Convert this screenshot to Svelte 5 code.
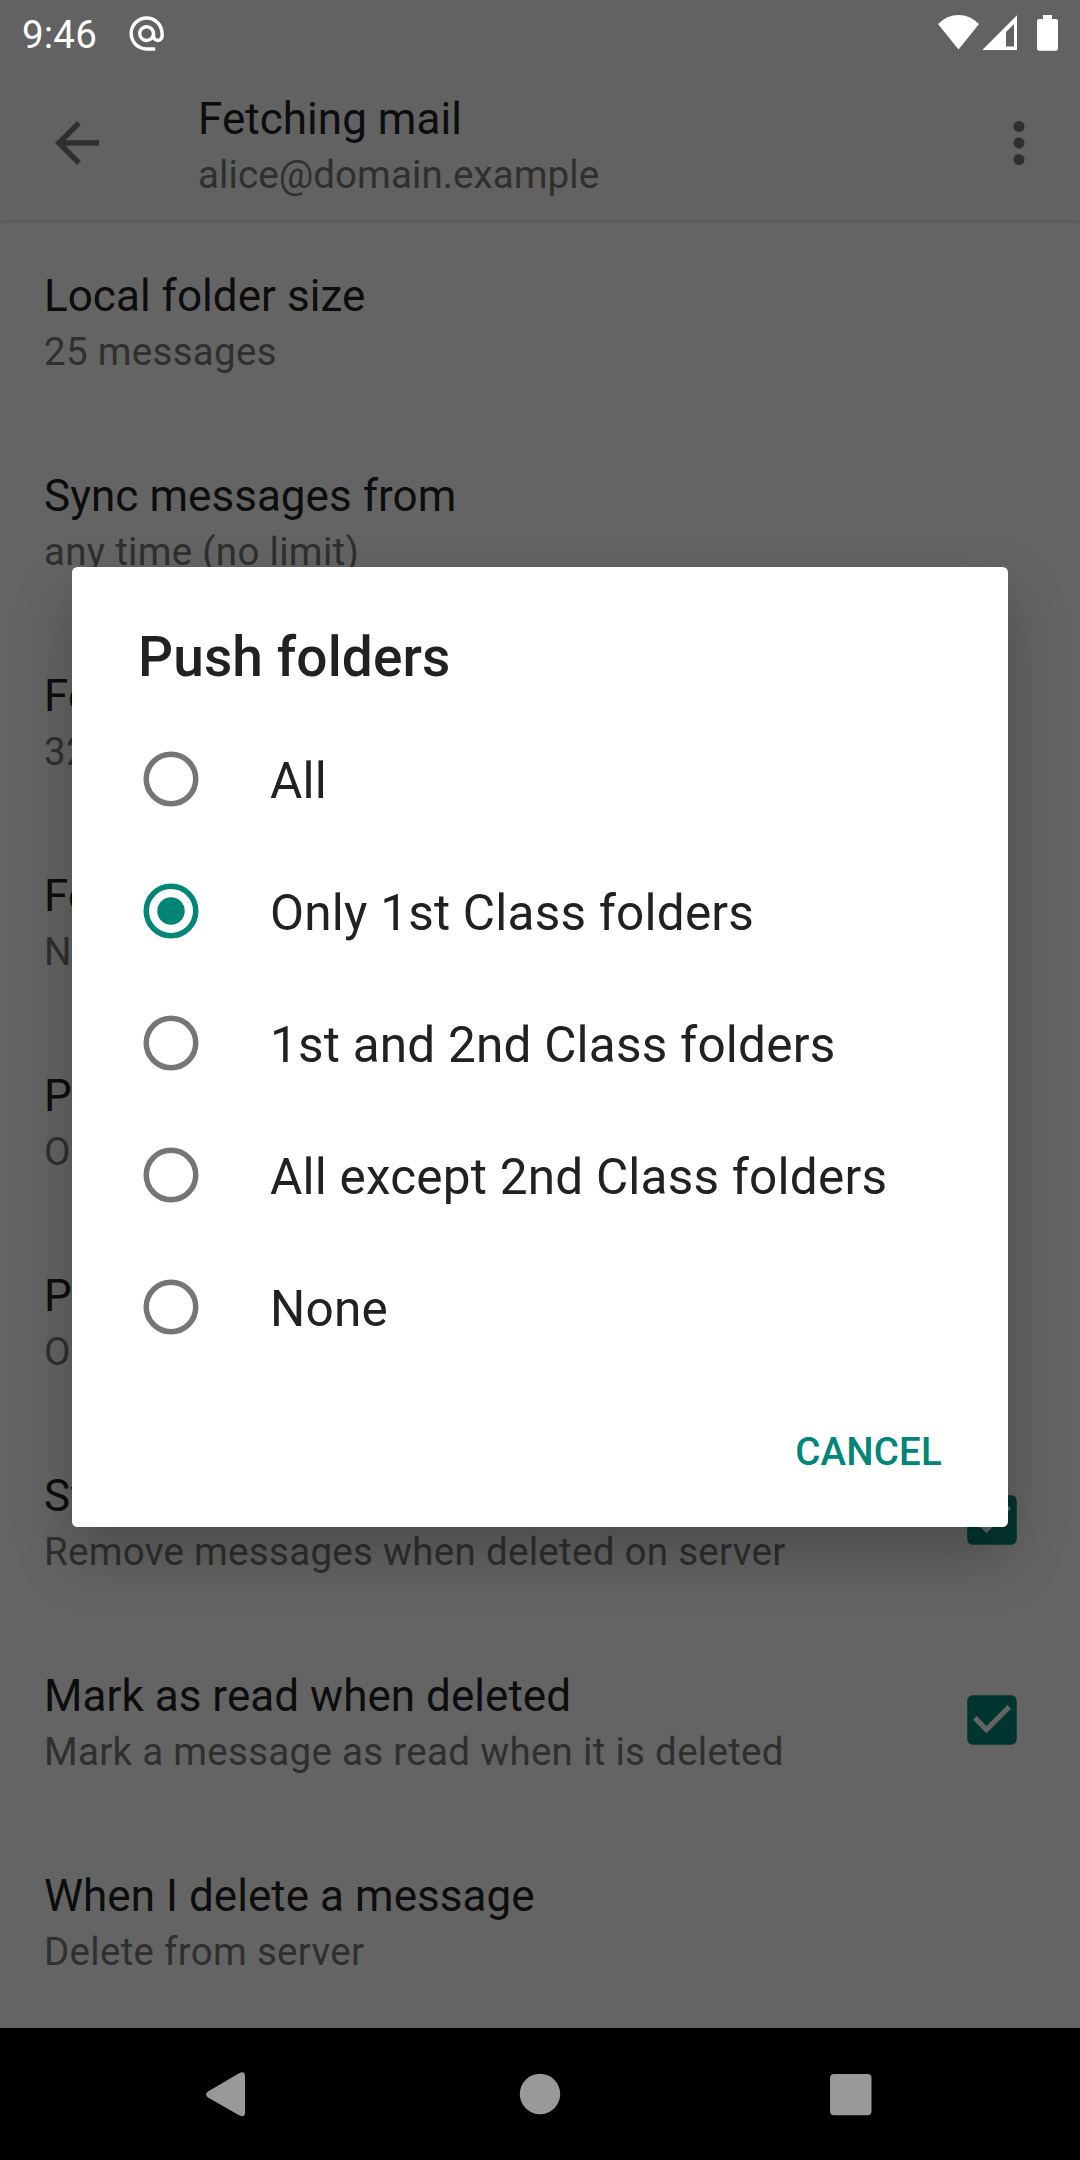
<script>
  const preferences = [
    { title: 'Local folder size', summary: '25 messages' },
    { title: 'Sync messages from', summary: 'any time (no limit)' },
    { title: 'Fetch messages up to', summary: '32 KiB' },
    { title: 'Folder poll frequency', summary: 'Never' },
    { title: 'Poll folders', summary: 'Only 1st Class folders' },
    { title: 'Push folders', summary: 'Only 1st Class folders' },
    { title: 'Sync server deletions', summary: 'Remove messages when deleted on server', checkbox: true },
    { title: 'Mark as read when deleted', summary: 'Mark a message as read when it is deleted', checkbox: true },
    { title: 'When I delete a message', summary: 'Delete from server' }
  ];

  const options = [
    'All',
    'Only 1st Class folders',
    '1st and 2nd Class folders',
    'All except 2nd Class folders',
    'None'
  ];

  let selected = $state('Only 1st Class folders');
</script>

<div class="screen">
  <div class="status">
    <span class="clock">9:46</span>
    <svg class="at" viewBox="0 0 24 24"><path d="M12 1.95c-5.52 0-10 4.48-10 10s4.48 10 10 10h5v-2h-5c-4.34 0-8-3.66-8-8s3.66-8 8-8 8 3.66 8 8v1.43c0 .79-.71 1.57-1.5 1.57s-1.5-.78-1.5-1.57v-1.43c0-2.76-2.24-5-5-5s-5 2.24-5 5 2.24 5 5 5c1.38 0 2.64-.56 3.54-1.47.65.89 1.77 1.47 2.96 1.47 1.97 0 3.5-1.6 3.5-3.57v-1.43c0-5.52-4.48-10-10-10zm0 13c-1.66 0-3-1.34-3-3s1.34-3 3-3 3 1.34 3 3-1.34 3-3 3z" /></svg>
    <svg class="indicators" viewBox="0 0 122 38">
      <path d="M0 10 Q9 1 20.5 1 Q32 1 41 10 L20.5 35.5 Z" />
      <path fill-rule="evenodd" d="M79 1.3 V36 H44.3 Z M76 10 L68 18 V32.5 H76 Z" />
      <path d="M105 1 H114 V5 H118 Q120 5 120 7 V34.7 Q120 36.7 118 36.7 H101 Q99 36.7 99 34.7 V7 Q99 5 101 5 H105 Z" />
    </svg>
  </div>

  <header class="toolbar">
    <svg class="icon" viewBox="0 0 24 24"><path d="M20 11H7.83l5.59-5.59L12 4l-8 8 8 8 1.41-1.41L7.83 13H20v-2z" /></svg>
    <div class="heading">
      <div class="title">Fetching mail</div>
      <div class="summary">alice@domain.example</div>
    </div>
    <svg class="icon" viewBox="0 0 24 24"><circle cx="12" cy="6" r="2" /><circle cx="12" cy="12" r="2" /><circle cx="12" cy="18" r="2" /></svg>
  </header>

  <main class="list">
    {#each preferences as pref}
      <div class="row">
        <div class="texts">
          <div class="title">{pref.title}</div>
          <div class="summary">{pref.summary}</div>
        </div>
        {#if pref.checkbox}
          <svg class="check" viewBox="0 0 24 24"><path d="M19 3H5c-1.11 0-2 .9-2 2v14c0 1.1.89 2 2 2h14c1.11 0 2-.9 2-2V5c0-1.1-.89-2-2-2zm-9 13.790l-4.9-4.9 1.3-1.3 3.6 3.6 7.6-7.6 1.3 1.3z" /></svg>
        {/if}
      </div>
    {/each}
  </main>

  <nav class="navbar">
    <svg viewBox="0 0 1080 132">
      <path d="M208 63.5 L239.5 45 Q245 42.5 245 48 V84.5 Q245 90 239.5 87.5 L208 69.5 Q204 66.5 208 63.5 Z" />
      <circle cx="540" cy="66" r="20.2" />
      <rect x="830" y="46" width="41.5" height="41.3" rx="4" />
    </svg>
  </nav>

  <div class="scrim">
    <section class="dialog">
      <h2>Push folders</h2>
      <div class="options">
        {#each options as option}
          <button class="option" onclick={() => (selected = option)}>
            <svg class="radio" class:on={option === selected} viewBox="0 0 24 24">
              <circle class="ring" cx="12" cy="12" r="9" />
              {#if option === selected}<circle cx="12" cy="12" r="5" />{/if}
            </svg>
            <span>{option}</span>
          </button>
        {/each}
      </div>
      <div class="actions"><button class="cancel">CANCEL</button></div>
    </section>
  </div>
</div>

<style>
  .screen {
    position: relative;
    display: flex;
    flex-direction: column;
    width: 1080px;
    height: 2160px;
    overflow: hidden;
    background: #fafafa;
    color: #212121;
    font-family: Roboto, sans-serif;
  }
  svg {
    display: block;
    flex: none;
    fill: currentColor;
  }
  button {
    border: 0;
    padding: 0;
    background: none;
    font: inherit;
    color: inherit;
    text-align: left;
  }
  .status {
    position: relative;
    z-index: 2;
    display: flex;
    align-items: flex-start;
    box-sizing: border-box;
    height: 66px;
    padding: 0 22px;
    color: #fff;
  }
  .clock {
    width: 103.5px;
    font-size: 38.5px;
    line-height: 70px;
    letter-spacing: 0.2px;
  }
  .at {
    width: 41.25px;
    height: 41.25px;
    margin-top: 12.7px;
  }
  .indicators {
    width: 122px;
    height: 38px;
    margin: 14px -2px 0 auto;
  }
  .toolbar {
    display: flex;
    align-items: center;
    box-sizing: border-box;
    height: 220px;
    margin-top: -66px;
    padding: 66px 28px 0 44px;
    background: #f5f5f5;
    box-shadow: 0 2px 5px rgba(0, 0, 0, 0.14);
    color: #757575;
  }
  .icon {
    width: 66px;
    height: 66px;
  }
  .heading {
    flex: 1;
    margin-left: 88px;
    padding-top: 4px;
  }
  .title {
    font-size: 44px;
    line-height: 52px;
    letter-spacing: 0.04px;
    color: #212121;
    white-space: nowrap;
  }
  .summary {
    margin-top: 7px;
    font-size: 38.5px;
    line-height: 46px;
    letter-spacing: 0.08px;
    color: #757575;
    white-space: nowrap;
  }
  .list {
    flex: 1;
  }
  .list .summary {
    letter-spacing: 0.3px;
  }
  .row {
    display: flex;
    justify-content: space-between;
    box-sizing: border-box;
    height: 200px;
    padding: 50px 55px 0 44px;
  }
  .check {
    width: 66px;
    height: 66px;
    margin-top: 17px;
    color: #008577;
  }
  .navbar {
    position: relative;
    z-index: 2;
    height: 132px;
    background: #000;
    color: #999;
  }
  .scrim {
    position: absolute;
    inset: 0;
    z-index: 1;
    display: flex;
    align-items: center;
    justify-content: center;
    padding: 66px 0 132px;
    background: rgba(0, 0, 0, 0.6);
  }
  .dialog {
    display: flex;
    flex-direction: column;
    box-sizing: border-box;
    width: 936px;
    height: 960px;
    border-radius: 5.5px;
    background: #fff;
    box-shadow: 0 28px 58px rgba(0, 0, 0, 0.25);
  }
  h2 {
    margin: 0;
    padding: 58px 66px 0;
    font-size: 55px;
    font-weight: 500;
    line-height: 64px;
    letter-spacing: 0.12px;
  }
  .options {
    display: flex;
    flex-direction: column;
    padding-top: 24px;
  }
  .option {
    display: flex;
    align-items: center;
    gap: 66px;
    height: 132px;
    padding-left: 66px;
    font-size: 49.5px;
    line-height: 58px;
    letter-spacing: 0.21px;
    white-space: nowrap;
  }
  .option span {
    padding-top: 4px;
  }
  .radio {
    width: 66px;
    height: 66px;
    color: #757575;
  }
  .radio.on {
    color: #008577;
  }
  .ring {
    fill: none;
    stroke: currentColor;
    stroke-width: 2;
  }
  .actions {
    display: flex;
    justify-content: flex-end;
    padding: 54px 66px 0;
  }
  .cancel {
    font-size: 38.5px;
    font-weight: 500;
    line-height: 50px;
    letter-spacing: 0.2px;
    color: #008577;
  }
</style>
